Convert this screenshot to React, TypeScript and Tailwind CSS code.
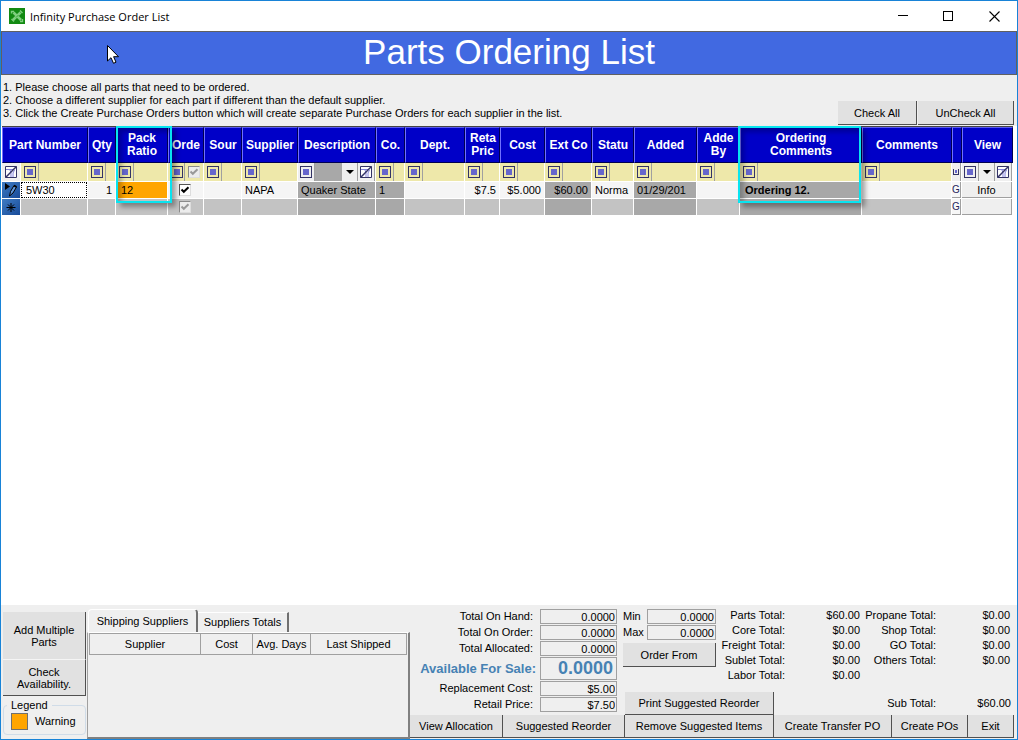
import type { ReactNode } from "react";
import { clsx } from "clsx";

const SHADED = "bg-[#a8a8a8]";
const LIGHT = "bg-[#f5f5f5]";
const EMPTY = "bg-[#c3c3c3]";

interface Column {
  key: string;
  title: string;
  width: string;
  filter: "plain" | "check" | "combo" | "tiny";
  shaded?: boolean;
  marked?: boolean;
}

const columns: Column[] = [
  { key: "part", title: "Part Number", width: "w-[67px]", filter: "plain" },
  { key: "qty", title: "Qty", width: "w-[28px]", filter: "plain" },
  { key: "pack", title: "Pack Ratio", width: "w-[52px]", filter: "plain", marked: true },
  { key: "order", title: "Orde", width: "w-[36px]", filter: "check" },
  { key: "source", title: "Sour", width: "w-[38px]", filter: "plain" },
  { key: "supplier", title: "Supplier", width: "w-[56px]", filter: "plain" },
  { key: "description", title: "Description", width: "w-[78px]", filter: "combo", shaded: true },
  { key: "co", title: "Co.", width: "w-[29px]", filter: "plain", shaded: true },
  { key: "dept", title: "Dept.", width: "w-[60px]", filter: "plain" },
  { key: "retail", title: "Reta Pric", width: "w-[35px]", filter: "plain" },
  { key: "cost", title: "Cost", width: "w-[45px]", filter: "plain" },
  { key: "ext", title: "Ext Co", width: "w-[47px]", filter: "plain", shaded: true },
  { key: "status", title: "Statu", width: "w-[42px]", filter: "plain" },
  { key: "added", title: "Added", width: "w-[63px]", filter: "plain", shaded: true },
  { key: "addedBy", title: "Adde By", width: "w-[43px]", filter: "plain" },
  { key: "orderingComments", title: "Ordering Comments", width: "w-[122px]", filter: "plain", shaded: true, marked: true },
  { key: "comments", title: "Comments", width: "", filter: "plain" },
  { key: "go", title: "", width: "w-[10px]", filter: "tiny" },
  { key: "view", title: "View", width: "w-[51px]", filter: "combo" },
];

const partRow: Record<string, string> = {
  qty: "1",
  pack: "12",
  supplier: "NAPA",
  description: "Quaker State",
  co: "1",
  retail: "$7.5",
  cost: "$5.000",
  ext: "$60.00",
  status: "Norma",
  added: "01/29/201",
  orderingComments: "Ordering 12.",
};

const rightAligned = ["qty", "retail", "cost", "ext"];

function OperatorIcon() {
  return (
    <svg width="12" height="12" viewBox="0 0 12 12" shapeRendering="crispEdges">
      <rect x="0.5" y="0.5" width="11" height="11" fill="none" stroke="#333366" />
      <rect x="3" y="3" width="6" height="6" fill="#6666cc" />
    </svg>
  );
}

function ClearFilterIcon() {
  return (
    <svg width="12" height="12" viewBox="0 0 12 12">
      <path d="M0.5 0.5H11.5V11.5H0.5Z" fill="#fdfdfd" stroke="#333366" />
      <path d="M1 3.5H8M5 4L6 7V11M9.5 4L8 7V11" fill="none" stroke="#8080d8" />
      <path d="M6 7H8V11H6Z" fill="#c4c4f0" />
      <path d="M0.5 11.5L11.5 0.5" stroke="#333366" strokeWidth="1.5" />
    </svg>
  );
}

function CaretIcon() {
  return (
    <svg width="8" height="4" viewBox="0 0 8 4">
      <path d="M0 0H8L4 4Z" fill="#000" />
    </svg>
  );
}

function CheckBox({ label, muted }: { label: string; muted?: boolean }) {
  return (
    <span className="relative block h-3 w-3">
      <input
        type="checkbox"
        aria-label={label}
        defaultChecked
        disabled={muted}
        className={clsx(
          "block h-3 w-3 appearance-none border border-r-[#dddddd] border-b-[#dddddd]",
          muted ? "border-t-[#8a8a8a] border-l-[#8a8a8a] bg-[#ececec]" : "border-t-[#555555] border-l-[#555555] bg-white",
        )}
      />
      <svg className="pointer-events-none absolute inset-0" width="12" height="12" viewBox="0 0 12 12">
        <path d="M2.5 5.5L4.8 7.8L9.5 3.2" fill="none" stroke={muted ? "#999" : "#000"} strokeWidth="2" />
      </svg>
    </span>
  );
}

function FilterCell({ column }: { column: Column }) {
  if (column.filter === "tiny") {
    return (
      <button type="button" aria-label="Filter" className="flex h-[18px] w-full items-center justify-center border-r border-[#a0a0a0] bg-[#efefef]">
        <svg width="6" height="6" viewBox="0 0 6 6" shapeRendering="crispEdges">
          <path d="M0.5 0V5.5H5.5V0" fill="none" stroke="#333366" />
          <rect x="2" y="1" width="2" height="3" fill="#6666cc" />
        </svg>
      </button>
    );
  }
  if (column.filter === "combo") {
    return (
      <div className={clsx("flex h-[18px]", SHADED)}>
        <button type="button" aria-label={`${column.title} operator`} className="flex w-[17px] shrink-0 items-center justify-center border-r border-[#a0a0a0] bg-[#efefef]">
          <OperatorIcon />
        </button>
        <button type="button" aria-label={`${column.title} values`} className="ml-auto flex w-4 items-center justify-center border-r border-[#a0a0a0] bg-[#efefef]">
          <CaretIcon />
        </button>
        <button type="button" aria-label={`Clear ${column.title} filter`} className="flex w-[17px] shrink-0 items-center justify-center border-r border-[#a0a0a0] bg-[#efefef]">
          <ClearFilterIcon />
        </button>
      </div>
    );
  }
  return (
    <div className="flex h-[18px] items-center">
      <button type="button" aria-label={`${column.title} operator`} className={clsx("flex h-[18px] shrink-0 items-center border-r border-[#a0a0a0] pl-[3px]", column.filter === "check" ? "w-[17px]" : "w-[18px]")}>
        <OperatorIcon />
      </button>
      {column.filter === "check" && (
        <span className="ml-[3px]">
          <CheckBox label="Order filter" muted />
        </span>
      )}
    </div>
  );
}

function RowMarker({ children }: { children?: ReactNode }) {
  return (
    <td className="border-r border-b border-white bg-linear-to-br from-[#3f7cc4] to-[#184a98] p-0">
      <svg width="18" height="16" viewBox="0 0 18 16">
        {children}
      </svg>
    </td>
  );
}

function GoButton() {
  return (
    <button type="button" className="block h-4 w-full overflow-hidden border-r border-b border-[#a0a0a0] bg-[#f7f7f7] text-[10px] leading-4 text-[#26265c]">
      G
    </button>
  );
}

function CellContent({ column }: { column: Column }) {
  if (column.key === "part") {
    return <input aria-label="Part Number" defaultValue="5W30" className="block h-4 w-full border border-dotted border-black bg-white px-1 outline-none" />;
  }
  if (column.key === "order") {
    return (
      <div className="flex h-4 items-center pl-[11px]">
        <CheckBox label="Order" />
      </div>
    );
  }
  if (column.key === "go") return <GoButton />;
  if (column.key === "view") {
    return (
      <button type="button" className="block h-4 w-full border-r border-b border-[#a0a0a0] bg-[#efefef] leading-4">
        Info
      </button>
    );
  }
  return (
    <div className={clsx("h-4 overflow-hidden leading-4 whitespace-nowrap", column.marked ? "px-[5px]" : "px-[3px]")}>{partRow[column.key]}</div>
  );
}

function PartsGrid() {
  return (
    <table className="w-full table-fixed border-separate border-spacing-0 border-t border-[#444444]">
      <colgroup>
        <col className="w-[19px]" />
        {columns.map((c) => (
          <col key={c.key} className={c.width} />
        ))}
      </colgroup>
      <thead>
        <tr>
          {columns.map((c, i) => (
            <th
              key={c.key}
              colSpan={i === 0 ? 2 : 1}
              className="relative h-9 border-t border-r border-b border-l border-t-[#5a5aee] border-r-[#000050] border-b-[#000050] border-l-[#7070ff] bg-[#0000c8] p-0 text-center text-[12px] leading-[13px] font-bold text-white"
            >
              <div className={clsx(c.title.includes(" ") && c.key !== "part" && c.key !== "ext" ? "px-1" : "whitespace-nowrap")}>{c.title}</div>
              {c.marked && (
                <span
                  className={clsx(
                    "pointer-events-none absolute -top-[2px] z-10 h-[77px] border-2 border-[#08e4f0] shadow-[4px_4px_5px_rgba(0,0,0,0.35),inset_4px_4px_5px_rgba(0,0,0,0.25)]",
                    c.key === "pack" ? "-left-px w-14" : "-left-[3px] w-[123px]",
                  )}
                />
              )}
            </th>
          ))}
        </tr>
      </thead>
      <tbody>
        <tr>
          <td className="h-[19px] border-r border-b border-white bg-[#efefef] p-0">
            <button type="button" aria-label="Clear all filters" className="flex h-[18px] w-full items-center justify-center">
              <ClearFilterIcon />
            </button>
          </td>
          {columns.map((c) => (
            <td key={c.key} className="h-[19px] border-r border-b border-white bg-[#eee8aa] p-0">
              <FilterCell column={c} />
            </td>
          ))}
        </tr>
        <tr>
          <RowMarker>
            <path d="M3 1L8 4.5L3 8Z" fill="#000" />
            <path d="M7.5 14L8.5 9.5L12 3.5L14.5 5L11 11Z" fill="#5f95d8" stroke="#000" />
            <path d="M12 3.5L14.5 5" stroke="#000" strokeWidth="2" />
          </RowMarker>
          {columns.map((c) => (
            <td
              key={c.key}
              className={clsx(
                "h-[17px] border-r border-b border-white p-0",
                c.key === "pack" ? "bg-[#ffa500]" : c.shaded ? SHADED : LIGHT,
                rightAligned.includes(c.key) && "text-right",
                c.key === "orderingComments" && "font-bold",
              )}
            >
              <CellContent column={c} />
            </td>
          ))}
        </tr>
        <tr>
          <RowMarker>
            <path d="M9 4V13M4.5 8.5H13.5M6 5.5L12 11.5M12 5.5L6 11.5" stroke="#000" />
          </RowMarker>
          {columns.map((c) => (
            <td key={c.key} className={clsx("h-[17px] border-r border-b border-white p-0", c.shaded ? SHADED : EMPTY)}>
              {c.key === "order" && (
                <div className="flex h-4 items-center pl-[11px]">
                  <CheckBox label="Order new row" muted />
                </div>
              )}
              {c.key === "go" && <GoButton />}
              {c.key === "view" && <button type="button" aria-label="View new row" className="block h-4 w-full border-r border-b border-[#a0a0a0] bg-[#efefef]" />}
            </td>
          ))}
        </tr>
      </tbody>
    </table>
  );
}

function FlatButton({ children, className }: { children: ReactNode; className?: string }) {
  return (
    <button type="button" className={clsx("border-r border-b border-[#505050] bg-[#e1e1e1] text-center leading-3", className)}>
      {children}
    </button>
  );
}

function NumberBox({ id, label, value, big }: { id: string; label: string; value: string; big?: boolean }) {
  return (
    <>
      <label htmlFor={id} className={clsx("text-right whitespace-nowrap", big ? "text-[13px] font-bold text-[#4682b4]" : "pr-[3px]")}>
        {label}
      </label>
      <input
        id={id}
        readOnly
        value={value}
        className={clsx(
          "block w-full min-w-0 border border-[#a0a0a0] bg-[#efefef] text-right outline-none",
          big ? "h-[23px] pr-[3px] text-[18px] font-bold text-[#4682b4]" : "h-[15px] pr-px",
        )}
      />
    </>
  );
}

const totals = [
  ["Parts Total:", "$60.00", "Propane Total:", "$0.00"],
  ["Core Total:", "$0.00", "Shop Total:", "$0.00"],
  ["Freight Total:", "$0.00", "GO Total:", "$0.00"],
  ["Sublet Total:", "$0.00", "Others Total:", "$0.00"],
  ["Labor Total:", "$0.00", "", ""],
];

function SupplierTabs() {
  return (
    <div className="flex w-[323px] shrink-0 flex-col pt-1">
      <div role="tablist" className="flex h-[23px] items-end pl-px">
        <button type="button" role="tab" aria-selected="true" className="h-[23px] w-[110px] rounded-t-sm border-t border-r-2 border-l border-t-white border-r-[#707070] border-l-white">
          Shipping Suppliers
        </button>
        <button type="button" role="tab" aria-selected="false" className="h-5 w-[91px] border-t border-r-2 border-t-white border-r-[#707070]">
          Suppliers Totals
        </button>
      </div>
      <div className="flex-1 border-t border-r-2 border-b-2 border-l border-t-white border-r-[#808080] border-b-[#808080] border-l-[#a0a0a0] pr-px pl-px">
        <table className="w-full table-fixed border-collapse">
          <thead>
            <tr className="h-[21px]">
              <th className="w-[111px] border border-[#a0a0a0] p-0 font-normal">Supplier</th>
              <th className="w-[52px] border border-[#a0a0a0] p-0 font-normal">Cost</th>
              <th className="w-[58px] border border-[#a0a0a0] p-0 font-normal">Avg. Days</th>
              <th className="border border-[#a0a0a0] p-0 font-normal">Last Shipped</th>
            </tr>
          </thead>
        </table>
      </div>
    </div>
  );
}

function Footer() {
  return (
    <footer className="flex h-[134px] bg-[#efefef]">
      <div className="flex w-[86px] shrink-0 flex-col pt-[7px] pl-[2px]">
        <FlatButton className="h-12 w-[83px] border-b-[#f5f5f5] px-2">Add Multiple Parts</FlatButton>
        <FlatButton className="h-9 w-[83px] px-1">Check Availability.</FlatButton>
        <fieldset className="mt-[3px] h-9 w-[83px] rounded border border-[#d0dce8] pl-[7px]">
          <legend className="-ml-1 px-1 leading-3">Legend</legend>
          <div className="mt-[2px] flex items-center gap-[7px]">
            <span className="h-[17px] w-[17px] border border-[#707070] bg-[#ffa500]" />
            Warning
          </div>
        </fieldset>
      </div>

      <SupplierTabs />

      <div className="flex flex-1 flex-col">
        <div className="flex flex-1">
          <div className="grid w-[207px] shrink-0 grid-cols-[1fr_77px] content-start items-center gap-x-1 gap-y-px pt-1">
            <NumberBox id="on-hand" label="Total On Hand:" value="0.0000" />
            <NumberBox id="on-order" label="Total On Order:" value="0.0000" />
            <NumberBox id="allocated" label="Total Allocated:" value="0.0000" />
            <NumberBox id="available" label="Available For Sale:" value="0.0000" big />
            <NumberBox id="replacement" label="Replacement Cost:" value="$5.00" />
            <NumberBox id="retail" label="Retail Price:" value="$7.50" />
          </div>
          <div className="flex flex-1 flex-col justify-between">
            <div className="flex">
              <div className="w-[99px] shrink-0 pt-1 pl-[6px]">
                <div className="grid grid-cols-[20px_69px] items-center gap-x-1 gap-y-px">
                  <NumberBox id="min" label="Min" value="0.0000" />
                  <NumberBox id="max" label="Max" value="0.0000" />
                </div>
                <FlatButton className="mt-[3px] h-6 w-full">Order From</FlatButton>
              </div>
              <dl className="grid flex-1 grid-cols-[69px_75px_76px_1fr] pt-[3px] pr-[7px] text-right leading-[15px] whitespace-nowrap">
                {totals.map(([label, value, label2, value2]) => (
                  <div key={label} className="contents">
                    <dt>{label}</dt>
                    <dd>{value}</dd>
                    <dt>{label2}</dt>
                    <dd>{value2}</dd>
                  </div>
                ))}
              </dl>
            </div>
            <div className="flex items-center pr-[6px] pl-2">
              <FlatButton className="h-[23px] w-[149px]">Print Suggested Reorder</FlatButton>
              <span className="w-[162px] text-right">Sub Total:</span>
              <span className="flex-1 text-right">$60.00</span>
            </div>
          </div>
        </div>
        <div className="mb-px flex h-[23px] pr-[3px]">
          <FlatButton className="w-[93px]">View Allocation</FlatButton>
          <FlatButton className="w-[122px]">Suggested Reorder</FlatButton>
          <FlatButton className="w-[149px]">Remove Suggested Items</FlatButton>
          <FlatButton className="w-[118px]">Create Transfer PO</FlatButton>
          <FlatButton className="w-[76px]">Create POs</FlatButton>
          <FlatButton className="flex-1">Exit</FlatButton>
        </div>
      </div>
    </footer>
  );
}

function TitleBar() {
  return (
    <header className="flex h-[30px] items-center bg-white pl-2">
      <svg width="16" height="16" viewBox="0 0 16 16">
        <rect width="16" height="16" fill="#128a12" />
        <path d="M4.5 4.5L12 12M11.5 4.5L4 12" stroke="#7fcf7f" strokeWidth="2.6" />
        <path d="M2.5 5.5V3.5H5M11 2.5L13.5 5M2.5 11L5 13.5M11 13.5H13.5V11" fill="none" stroke="#7fcf7f" strokeWidth="1.4" />
        <path d="M7 9.5L9.5 7" stroke="#3da53d" />
      </svg>
      <span className="ml-[5px] font-['Open_Sans',sans-serif] text-[11px]">Infinity Purchase Order List</span>
      <div className="ml-auto flex">
        <button type="button" aria-label="Minimize" className="flex h-[30px] w-[45px] items-center justify-center">
          <svg width="11" height="11" viewBox="0 0 11 11" shapeRendering="crispEdges">
            <path d="M1 4.5H11" stroke="#000" />
          </svg>
        </button>
        <button type="button" aria-label="Maximize" className="flex h-[30px] w-[46px] items-center justify-center">
          <svg width="11" height="11" viewBox="0 0 11 11" shapeRendering="crispEdges">
            <path d="M0.5 0.5H9.5V9.5H0.5Z" fill="none" stroke="#000" />
          </svg>
        </button>
        <button type="button" aria-label="Close" className="flex h-[30px] w-[46px] items-center justify-center">
          <svg width="11" height="11" viewBox="0 0 11 11">
            <path d="M0.5 0.5L10.5 10.5M10.5 0.5L0.5 10.5" stroke="#000" strokeWidth="1.1" />
          </svg>
        </button>
      </div>
    </header>
  );
}

export default function App() {
  return (
    <div className="relative flex min-h-screen flex-col border border-[#1883d7] bg-[#efefef] font-['Liberation_Sans',Arial,sans-serif] text-[11px] leading-[13px] text-black">
      <TitleBar />
      <h1 className="h-11 border border-[#606060] bg-[#4169e1] text-center text-[35px] leading-[40px] text-white">Parts Ordering List</h1>
      <svg className="pointer-events-none absolute top-11 left-[106px]" width="13" height="20" viewBox="0 0 13 20">
        <path d="M0.5 0.5V16L4 12.7L6.5 18.3L9 17.2L6.6 11.7H11.5Z" fill="#fff" stroke="#000" />
      </svg>
      <div className="flex items-end justify-between pr-[3px] pl-[2px]">
        <ol className="h-[51px] pt-[6px]">
          <li>1. Please choose all parts that need to be ordered.</li>
          <li>2. Choose a different supplier for each part if different than the default supplier.</li>
          <li>3. Click the Create Purchase Orders button which will create separate Purchase Orders for each supplier in the list.</li>
        </ol>
        <div className="mb-px flex gap-px">
          <FlatButton className="h-6 w-[79px]">Check All</FlatButton>
          <FlatButton className="h-6 w-[96px]">UnCheck All</FlatButton>
        </div>
      </div>
      <main className="flex-1 bg-white pr-1 pl-px">
        <PartsGrid />
      </main>
      <Footer />
    </div>
  );
}
